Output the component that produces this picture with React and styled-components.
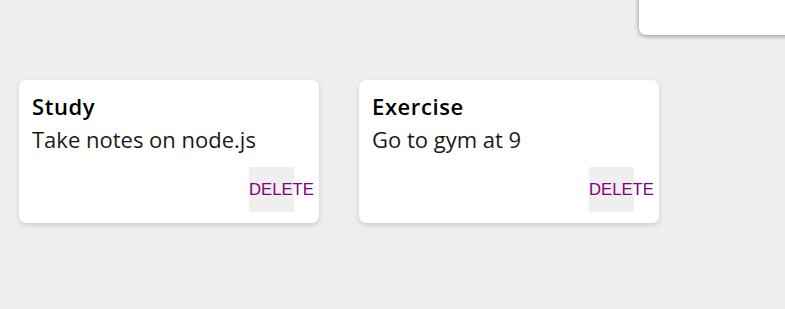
import React from "react";
import styled, { createGlobalStyle } from "styled-components";

const GlobalStyle = createGlobalStyle`
  html, body {
    margin: 0;
    padding: 0;
    background: #eeeeee;
    overflow: hidden;
    font-family: "Open Sans", "Noto Sans", sans-serif;
  }
`;

const Page = styled.div`
  width: 785px;
  height: 309px;
  overflow: hidden;
`;

const TopBar = styled.div`
  display: flex;
  height: 35px;
`;

const CreateBox = styled.div`
  margin-left: 639px;
  margin-top: -30px;
  width: 200px;
  height: 65px;
  flex-shrink: 0;
  background: #fff;
  border-radius: 7px;
  box-shadow: 0 1px 5px rgb(138, 138, 138);
`;

const Notes = styled.div`
  display: flex;
  gap: 40px;
  padding: 45px 0 0 19px;
`;

const Note = styled.div`
  box-sizing: border-box;
  width: 300px;
  height: 143px;
  background: #fff;
  border-radius: 7px;
  box-shadow: 0 2px 5px #ccc;
  padding: 11px 13px 11px 13px;
  display: flex;
  flex-direction: column;
`;

const Title = styled.h1`
  margin: 0;
  font-size: 22px;
  line-height: 30px;
  font-weight: 600;
  letter-spacing: 0.6px;
  color: #000;
`;

const Content = styled.p`
  margin: 3px 0 0;
  font-size: 22px;
  line-height: 30px;
  font-weight: 400;
  color: #1a1a1a;
  white-space: pre-wrap;
`;

const DeleteButton = styled.button`
  margin-top: auto;
  align-self: flex-end;
  margin-right: 12px;
  width: 45px;
  height: 45px;
  padding: 0;
  border: none;
  background: #efefef;
  color: purple;
  font-family: "Liberation Sans", Arial, sans-serif;
  font-size: 16.7px;
  text-align: left;
  white-space: nowrap;
  overflow: visible;
  cursor: pointer;
`;

const notes = [
  { title: "Study", content: "Take notes on node.js" },
  { title: "Exercise", content: "Go to gym at 9" },
];

export default function App() {
  return (
    <Page>
      <GlobalStyle />
      <TopBar>
        <CreateBox />
      </TopBar>
      <Notes>
        {notes.map((n) => (
          <Note key={n.title}>
            <Title>{n.title}</Title>
            <Content>{n.content}</Content>
            <DeleteButton>DELETE</DeleteButton>
          </Note>
        ))}
      </Notes>
    </Page>
  );
}
